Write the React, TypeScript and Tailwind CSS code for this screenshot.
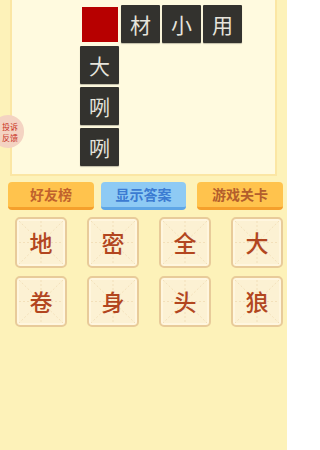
import React from "react";

const font = { fontFamily: '"Noto Sans CJK SC", "Noto Sans", sans-serif' };

function Dark({ ch }: { ch: string }) {
  return (
    <div className="w-[39px] h-[38px] bg-[#33322e] flex items-center justify-center text-[21px] leading-none text-[#e6e4dc] rounded-[1px] shadow-[0_1px_1px_rgba(0,0,0,0.25)]">
      {ch}
    </div>
  );
}

function Empty() {
  return <div className="w-[39px] h-[38px]" />;
}

function CharTile({ ch }: { ch: string }) {
  return (
    <div className="relative w-[52px] h-[51px] rounded-[5px] border-2 border-[#e8cb9a] bg-[#fcf1d3] flex items-center justify-center shadow-[inset_0_0_0_2px_#fff6df]">
      <svg className="absolute inset-0 w-full h-full" viewBox="0 0 48 47" preserveAspectRatio="none">
        <g stroke="#f0dcb4" strokeWidth="0.8" strokeDasharray="2 2" fill="none">
          <line x1="2" y1="2" x2="46" y2="45" />
          <line x1="46" y1="2" x2="2" y2="45" />
          <line x1="24" y1="2" x2="24" y2="45" />
          <line x1="2" y1="23.5" x2="46" y2="23.5" />
        </g>
      </svg>
      <span className="relative text-[23px] leading-none font-medium text-[#b2461f]">{ch}</span>
    </div>
  );
}

export default function App() {
  const grid: (string | null | "red")[][] = [
    ["red", "材", "小", "用"],
    ["大", null, null, null],
    ["咧", null, null, null],
    ["咧", null, null, null],
  ];
  const chars = ["地", "密", "全", "大", "卷", "身", "头", "狼"];
  return (
    <div className="relative w-[287px] h-[450px] bg-[#fdf2b9] overflow-hidden" style={font}>
      <div className="mx-[10px] mt-[-4px] h-[180px] bg-[#fffadf] border-2 border-[#fbe6a4] pl-[68px] pt-[7px]">
        <div className="grid grid-cols-[39px_39px_39px_39px] gap-x-[2px] gap-y-[3px]">
          {grid.flat().map((c, i) =>
            c === "red" ? (
              <div key={i} className="w-[39px] h-[38px] flex items-center justify-center">
                <div className="w-[36px] h-[35px] bg-[#b70000]" />
              </div>
            ) : c ? (
              <Dark key={i} ch={c} />
            ) : (
              <Empty key={i} />
            )
          )}
        </div>
      </div>

      <div className="absolute left-[-8px] top-[115px] w-[32px] h-[33px] rounded-full bg-[#f4d3c2] flex flex-col items-center justify-center pl-[4px] text-[8px] leading-[11px] text-[#c8301f]">
        <span className="block h-[11px]">投诉</span>
        <span className="block h-[11px]">反馈</span>
      </div>

      <div className="flex mt-[6px] pl-[8px]">
        <div className="w-[86px] h-[28px] rounded-[4px] bg-[#ffc34d] border-b-[3px] border-[#f5a02c] flex items-center justify-center text-[14px] font-bold text-[#c0622c]">
          好友榜
        </div>
        <div className="ml-[7px] w-[85px] h-[28px] rounded-[4px] bg-[#8ecaf4] border-b-[3px] border-[#5fa6e6] flex items-center justify-center text-[14px] font-bold text-[#3b7bd2]">
          显示答案
        </div>
        <div className="ml-[11px] w-[86px] h-[28px] rounded-[4px] bg-[#ffc34d] border-b-[3px] border-[#f5a02c] flex items-center justify-center text-[14px] font-bold text-[#b35e2c]">
          游戏关卡
        </div>
      </div>

      <div className="grid grid-cols-[52px_52px_52px_52px] gap-x-[20px] gap-y-[8px] pl-[15px] mt-[7px]">
        {chars.map((c, i) => (
          <CharTile key={i} ch={c} />
        ))}
      </div>
    </div>
  );
}
